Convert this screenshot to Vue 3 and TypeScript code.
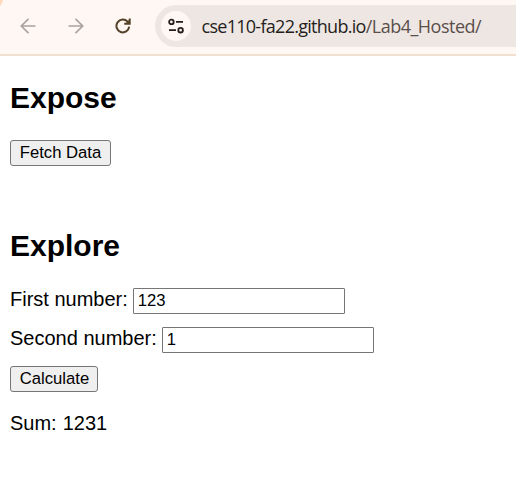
<script setup lang="ts">
import { computed, ref } from 'vue'

const first = ref('123')
const second = ref('1')
const sum = ref('1231')
const total = computed(() => `Sum: ${sum.value}`)

function calculate(): void {
  sum.value = first.value + second.value
}
</script>

<template>
  <div class="window">
    <header class="toolbar">
      <svg class="corner" width="4" height="7" viewBox="0 0 4 7"><path d="M0 0h3Q2 4 0 6z" fill="#ffdabb" /></svg>
      <svg class="nav" width="16" height="16" viewBox="0 0 16 16" fill="none" stroke="#aca2a0" stroke-width="1.7">
        <path d="M15.5 8H1.5M8.5 .8L1.3 8l7.2 7.2" />
      </svg>
      <svg class="nav" width="16" height="16" viewBox="0 0 16 16" fill="none" stroke="#aca2a0" stroke-width="1.7">
        <path d="M.5 8h14M7.5 .8L14.7 8l-7.2 7.2" />
      </svg>
      <svg class="nav" width="16" height="16" viewBox="0 0 16 16" fill="none" stroke="#554229" stroke-width="2">
        <path d="M14.2 8.7A6.4 6.4 0 1 1 12.6 3.7L14 5.2" />
        <path d="M14.7 .5v5.3H9.2" />
        <path d="M11 5l3.5-3.5V5z" fill="#554229" stroke="none" />
      </svg>
      <div class="address">
        <span class="site">
          <svg width="16" height="16" viewBox="0 0 16 16" fill="none" stroke="#241e1d" stroke-width="1.8">
            <circle cx="3.4" cy="3.9" r="2.3" />
            <path d="M8 3.9h7M1 12.2h7" />
            <circle cx="12.6" cy="12.2" r="2.3" />
          </svg>
        </span>
        <span class="url">cse110-fa22.github.io<span class="path">/Lab4_Hosted/</span></span>
      </div>
    </header>
    <main>
      <h2>Expose</h2>
      <button class="fetch" type="button">Fetch Data</button>
      <h2 class="explore">Explore</h2>
      <div class="row">
        <label for="first">First number:</label>
        <input id="first" v-model="first" type="text" />
      </div>
      <div class="row">
        <label for="second">Second number:</label>
        <input id="second" v-model="second" type="text" />
      </div>
      <button class="calc" type="button" @click="calculate">Calculate</button>
      <p>{{ total }}</p>
    </main>
  </div>
</template>

<style>
body {
  background: #fff;
  overflow: hidden;
}
</style>

<style scoped>
.window {
  height: 477px;
  overflow: hidden;
  font-family: "Liberation Sans", Arial, sans-serif;
  color: #000;
}
.toolbar {
  position: relative;
  box-sizing: border-box;
  height: 56px;
  padding: 5px 0 0 20px;
  display: flex;
  align-items: flex-start;
  background: #fff7f4;
  border-bottom: 2px solid #f1dfd0;
}
.corner {
  position: absolute;
  left: 0;
  top: 0;
}
.nav {
  flex: none;
  margin: 12.5px 31.5px 0 0;
}
.address {
  flex: 1;
  height: 42px;
  margin-left: -7.5px;
  padding-left: 6px;
  box-sizing: border-box;
  display: flex;
  align-items: center;
  background: #eee6e2;
  border-radius: 21px 0 0 21px;
}
.site {
  width: 30px;
  height: 30px;
  flex: none;
  border-radius: 50%;
  background: #fff7f4;
  display: flex;
  align-items: center;
  justify-content: center;
}
.url {
  margin-left: 10.5px;
  font: 18px/24px "Open Sans", sans-serif;
  letter-spacing: -0.72px;
  color: #241e1d;
  white-space: nowrap;
}
.path {
  letter-spacing: -0.5px;
  color: #5b4f4b;
}
main {
  padding: 25px 10px 0;
  display: flex;
  flex-direction: column;
  align-items: flex-start;
}
h2 {
  margin: 0 0 26px;
  font-size: 30px;
  line-height: 33px;
}
.explore {
  margin: 63px 0 26px;
}
button {
  box-sizing: border-box;
  height: 26px;
  padding: 0 0 1px;
  border: 1px solid #767676;
  border-radius: 3px;
  background: #efefef;
  color: #000;
  font: 16.667px/23px "Liberation Sans", Arial, sans-serif;
}
.fetch {
  width: 101px;
}
.calc {
  width: 88px;
  padding-left: 1px;
}
.row {
  height: 26px;
  margin-bottom: 13px;
  display: flex;
  align-items: center;
  gap: 5px;
  font-size: 20px;
  line-height: 22px;
}
label {
  padding-bottom: 4px;
}
input {
  box-sizing: border-box;
  width: 212px;
  height: 26px;
  margin: 0;
  padding: 0 4px;
  border: 1px solid #767676;
  border-radius: 1px;
  background: #fff;
  color: #000;
  font: 16.667px "Liberation Sans", Arial, sans-serif;
  outline: none;
}
p {
  margin: 20px 0 0;
  font-size: 20px;
  line-height: 22px;
  word-spacing: 0.5px;
}
</style>
